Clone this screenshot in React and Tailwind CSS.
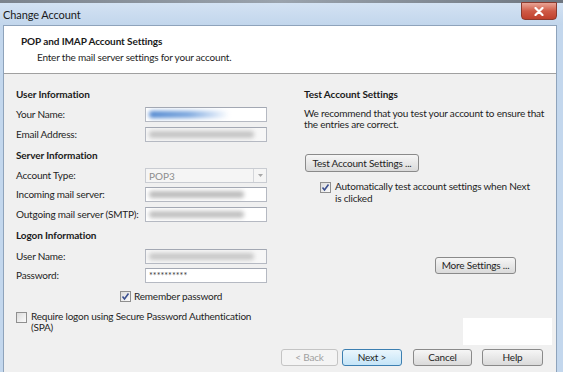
import React from "react";

const font = { fontFamily: 'Lato, "Liberation Sans", sans-serif' };
const T = "text-[10px] tracking-[-0.2px]";

function Input({ children, disabled }) {
  return (
    <div
      className={`relative w-[122px] h-[15px] border border-[#b5b9c2] border-t-[#a3a8b3] overflow-hidden ${
        disabled ? "bg-[#f7f7f7]" : "bg-white"
      }`}
    >
      {children}
    </div>
  );
}

function Blur({ w, color = "#b9b9b9", blue }) {
  return (
    <div
      className={`absolute left-[3px] top-[3px] h-[7px] rounded-[3px] blur-[2px] ${blue ? "bg-gradient-to-r from-[#4f86cf] via-[#7aa6dd] to-[#ffffff]" : ""}`}
      style={{ width: w, backgroundColor: blue ? undefined : color }}
    />
  );
}

function Row({ label, mt, children }) {
  return (
    <div className={`flex items-center h-[15px] ${mt}`}>
      <div className={`w-[129px] ${T} leading-[11px] text-[#1e1e1e] whitespace-nowrap`}>{label}</div>
      {children}
    </div>
  );
}

function Check({ checked }) {
  return (
    <div className="w-[11px] h-[11px] border border-[#8f8f8f] bg-gradient-to-br from-[#dcdcdc] to-[#fbfbfb] flex items-center justify-center shrink-0">
      {checked && (
        <svg width="9" height="9" viewBox="0 0 9 9">
          <path d="M1.5 4.5 L3.5 7 L7.5 1.5" fill="none" stroke="#3a4f8f" strokeWidth="1.6" />
        </svg>
      )}
    </div>
  );
}

function Btn({ children, w, h = "h-[17px]", disabled, focus }) {
  return (
    <div
      className={`${w} ${h} rounded-[3px] border flex items-center justify-center whitespace-nowrap ${T} leading-[11px] ${
        disabled
          ? "border-[#c4c4c4] bg-[#f4f4f4] text-[#a0a0a0]"
          : focus
          ? "border-[#3c7fb1] bg-gradient-to-b from-[#eaf6fd] to-[#c4e4f7] text-[#1e1e1e]"
          : "border-[#8a8a8a] bg-gradient-to-b from-[#f6f6f6] to-[#dadada] text-[#1e1e1e]"
      }`}
    >
      {children}
    </div>
  );
}

function Heading({ children, mt = "" }) {
  return <div className={`h-[14px] ${mt} flex items-center text-[10px] tracking-[-0.1px] font-bold text-[#1a1a1a]`}>{children}</div>;
}

export default function App() {
  return (
    <div className="w-[563px] h-[372px] overflow-hidden bg-[#c3d7ed] flex flex-col" style={font}>
      <div className="h-[3px] bg-gradient-to-r from-[#7b838d] via-[#9aa3ad] to-[#6e7680] shrink-0" />
      <div className="h-[22px] shrink-0 relative flex items-center pl-[3px] bg-gradient-to-b from-[#d3e2f3] to-[#c2d6ec]">
        <span className="text-[11px] tracking-[-0.1px] text-[#1a1a1a] leading-none">Change Account</span>
        <div className="absolute left-[521px] top-[-1px] w-[36px] h-[18px] rounded-b-[4px] border border-[#8a3a2e] bg-gradient-to-b from-[#e8a496] via-[#cf5a46] to-[#c0402c] flex items-center justify-center">
          <svg width="10" height="9" viewBox="0 0 10 9">
            <path d="M1.5 1 L8.5 8 M8.5 1 L1.5 8" stroke="#ffffff" strokeWidth="2.2" strokeLinecap="round" />
          </svg>
        </div>
      </div>
      <div className="flex-1 flex pl-[3px] pr-[6px] min-w-0">
        <div className="flex-1 min-w-0 flex flex-col border-l border-t border-r border-[#8ea3bb] bg-[#f0f0f0]">
          <div className="h-[48px] shrink-0 bg-white border-b border-[#a0a0a0] pl-[17px] pt-[9px]">
            <div className="text-[10px] tracking-[-0.1px] leading-[12px] font-bold text-[#1a1a1a]">POP and IMAP Account Settings</div>
            <div className={`${T} leading-[12px] text-[#1e1e1e] mt-[4px] pl-[16px]`}>
              Enter the mail server settings for your account.
            </div>
          </div>
          <div className="flex-1 min-w-0 relative pl-[12px] pt-[13px] pr-[13px] flex flex-col">
            <div className="flex min-w-0">
              <div className="w-[251px] shrink-0 flex flex-col">
                <Heading>User Information</Heading>
                <Row label="Your Name:" mt="mt-[6px]">
                  <Input>
                    <Blur w={80} blue />
                  </Input>
                </Row>
                <Row label="Email Address:" mt="mt-[5px]">
                  <Input disabled>
                    <Blur w={105} color="#c4c4c4" />
                  </Input>
                </Row>
                <Heading mt="mt-[6px]">Server Information</Heading>
                <Row label="Account Type:" mt="mt-[6px]">
                  <div className="w-[122px] h-[15px] border border-[#c9ccd2] bg-[#f5f5f5] flex items-center">
                    <span className="flex-1 pl-[3px] text-[10px] leading-none text-[#8d8d8d]">POP3</span>
                    <div className="w-[13px] h-full border-l border-[#d4d6da] flex items-center justify-center">
                      <svg width="5" height="3" viewBox="0 0 5 3">
                        <path d="M0 0 L5 0 L2.5 3 Z" fill="#a8a8a8" />
                      </svg>
                    </div>
                  </div>
                </Row>
                <Row label="Incoming mail server:" mt="mt-[4px]">
                  <Input>
                    <Blur w={95} color="#bcbcbc" />
                  </Input>
                </Row>
                <Row label="Outgoing mail server (SMTP):" mt="mt-[5px]">
                  <Input>
                    <Blur w={95} color="#c0c0c0" />
                  </Input>
                </Row>
                <Heading mt="mt-[6px]">Logon Information</Heading>
                <Row label="User Name:" mt="mt-[7px]">
                  <Input disabled>
                    <Blur w={105} color="#c8c8c8" />
                  </Input>
                </Row>
                <Row label="Password:" mt="mt-[4px]">
                  <Input>
                    <span className="absolute left-[3px] top-[2px] text-[9px] leading-[10px] text-[#3a3a3a]">**********</span>
                  </Input>
                </Row>
                <div className="flex items-center h-[14px] mt-[6px] pl-[104px] gap-[3px]">
                  <Check checked />
                  <span className={`${T} leading-[11px] text-[#1e1e1e]`}>Remember password</span>
                </div>
                <div className="flex items-start mt-[8px] gap-[4px]">
                  <div className="pt-[1px]">
                    <Check />
                  </div>
                  <span className={`${T} leading-[11px] text-[#1e1e1e] w-[240px]`}>
                    Require logon using Secure Password Authentication (SPA)
                  </span>
                </div>
              </div>
              <div className="ml-[37px] flex-1 min-w-0 flex flex-col">
                <Heading>Test Account Settings</Heading>
                <div className={`mt-[7px] w-[250px] ${T} leading-[11px] text-[#1e1e1e]`}>
                  We recommend that you test your account to ensure that the entries are correct.
                </div>
                <div className="mt-[24px] ml-[1px]">
                  <Btn w="w-[114px]" h="h-[18px]">Test Account Settings ...</Btn>
                </div>
                <div className="flex items-start mt-[9px] ml-[16px] gap-[4px]">
                  <div className="pt-[1px]">
                    <Check checked />
                  </div>
                  <span className={`${T} leading-[11.5px] text-[#1e1e1e] w-[195px]`}>
                    Automatically test account settings when Next is clicked
                  </span>
                </div>
                <div className="mt-[53px] ml-[131px]">
                  <Btn w="w-[81px]">More Settings ...</Btn>
                </div>
              </div>
            </div>
            <div className="flex justify-end mt-[16px]">
              <Btn w="w-[57px]" disabled>&lt; Back</Btn>
              <div className="ml-[4px]">
                <Btn w="w-[60px]" focus>Next &gt;</Btn>
              </div>
              <div className="ml-[11px]">
                <Btn w="w-[59px]">Cancel</Btn>
              </div>
              <div className="ml-[10px]">
                <Btn w="w-[61px]">Help</Btn>
              </div>
            </div>
            <div className="absolute left-[459px] top-[244px] w-[89px] h-[27px] bg-white" />
          </div>
        </div>
      </div>
    </div>
  );
}
